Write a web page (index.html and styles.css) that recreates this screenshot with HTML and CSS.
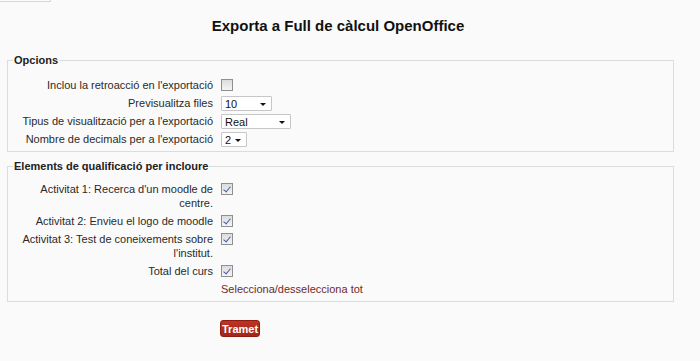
FILE: index.html
```html
<!DOCTYPE html>
<html lang="ca">
<head>
    <meta charset="UTF-8">
    <meta name="viewport" content="width=device-width, initial-scale=1.0">
    <title>Exporta a Full de càlcul OpenOffice</title>
    <link rel="stylesheet" href="styles.css">
</head>
<body>
    <div class="tab"></div>
    <h2 class="title">Exporta a Full de càlcul OpenOffice</h2>

    <form class="mform">
        <fieldset class="options">
            <legend>Opcions</legend>
            <div class="fitem">
                <label class="fitemtitle" for="feedback">Inclou la retroacció en l'exportació</label>
                <div class="felement"><input type="checkbox" id="feedback"></div>
            </div>
            <div class="fitem">
                <label class="fitemtitle" for="preview">Previsualitza files</label>
                <div class="felement"><span class="sel w50"><select id="preview"><option>10</option></select></span></div>
            </div>
            <div class="fitem">
                <label class="fitemtitle" for="display">Tipus de visualització per a l'exportació</label>
                <div class="felement"><span class="sel w69"><select id="display"><option>Real</option></select></span></div>
            </div>
            <div class="fitem">
                <label class="fitemtitle" for="decimals">Nombre de decimals per a l'exportació</label>
                <div class="felement"><span class="sel w25"><select id="decimals"><option>2</option></select></span></div>
            </div>
        </fieldset>

        <fieldset class="items">
            <legend>Elements de qualificació per incloure</legend>
            <div class="fitem">
                <label class="fitemtitle" for="it1">Activitat 1: Recerca d'un moodle de centre.</label>
                <div class="felement"><input type="checkbox" id="it1" checked></div>
            </div>
            <div class="fitem">
                <label class="fitemtitle" for="it2">Activitat 2: Envieu el logo de moodle</label>
                <div class="felement"><input type="checkbox" id="it2" checked></div>
            </div>
            <div class="fitem">
                <label class="fitemtitle" for="it3">Activitat 3: Test de coneixements sobre l'institut.</label>
                <div class="felement"><input type="checkbox" id="it3" checked></div>
            </div>
            <div class="fitem">
                <label class="fitemtitle" for="total">Total del curs</label>
                <div class="felement"><input type="checkbox" id="total" checked></div>
            </div>
            <div class="fitem">
                <div class="fitemtitle"></div>
                <div class="felement"><a href="#" class="selectall">Selecciona/desselecciona tot</a></div>
            </div>
        </fieldset>

        <div class="fitem buttons">
            <div class="fitemtitle"></div>
            <div class="felement"><button type="submit">Tramet</button></div>
        </div>
    </form>
</body>
</html>
```

FILE: styles.css
```css
body {
    font-family: "Liberation Sans", Arial, sans-serif;
    font-size: 11px;
    line-height: 14px;
    margin: 0;
    background-color: #fafafa;
    color: #2a2a2a;
}
.tab {
    width: 50px;
    height: 1px;
    border-bottom: 1px solid #d6d6d6;
    border-right: 1px solid #d6d6d6;
}
.title {
    font-size: 15px;
    line-height: 18px;
    color: #111;
    text-align: center;
    margin: 15px 0 0;
    width: 676px;
}
.mform {
    width: 667px;
    margin-left: 7px;
    margin-top: 18px;
}
fieldset {
    border: 1px solid #dcdcdc;
    margin: 0 0 7px;
    padding: 11px 0 1px;
}
fieldset.items {
    padding-top: 9px;
}
legend {
    font-weight: bold;
    color: #222;
    padding: 0 1px;
    margin-left: 5px;
}
.fitem {
    display: flex;
    align-items: flex-start;
    margin-bottom: 4px;
}
.fitemtitle {
    width: 213px;
    padding-right: 8px;
    text-align: right;
    box-sizing: border-box;
    flex-shrink: 0;
}
.felement {
    min-height: 14px;
}
input[type="checkbox"] {
    appearance: none;
    width: 12px;
    height: 12px;
    margin: 1px 0 0;
    border: 1px solid #8e8f8f;
    background: linear-gradient(#dcdcdc, #f4f4f4);
    display: block;
    position: relative;
    box-sizing: border-box;
}
input[type="checkbox"]:checked::after {
    content: "";
    position: absolute;
    left: 3px;
    top: 1px;
    width: 3px;
    height: 6px;
    border: solid #4b5d9f;
    border-width: 0 1.5px 1.5px 0;
    transform: rotate(40deg);
}
.sel {
    display: block;
    position: relative;
    height: 15px;
    margin-bottom: -1px;
}
.sel select {
    appearance: none;
    width: 100%;
    height: 15px;
    margin: 0;
    padding: 0 0 0 3px;
    border: 1px solid #c6c6c6;
    border-radius: 1px;
    background: #fff;
    font-family: inherit;
    font-size: 11px;
    color: #111;
    box-sizing: border-box;
}
.sel::after {
    content: "";
    position: absolute;
    right: 6px;
    top: 7px;
    border-left: 3px solid transparent;
    border-right: 3px solid transparent;
    border-top: 3px solid #111;
    pointer-events: none;
}
.w50 { width: 51px; }
.w69 { width: 70px; }
.w25 { width: 26px; }
.selectall {
    color: #6e2b2b;
    text-decoration: none;
}
.buttons {
    margin-top: 18px;
}
button {
    font-family: inherit;
    font-size: 11px;
    font-weight: bold;
    color: #fff;
    background: linear-gradient(#bb3325, #a4261a);
    border: 1px solid #8e1a10;
    border-radius: 3px;
    height: 17px;
    padding: 0 1px;
    line-height: 14px;
    cursor: pointer;
}
```
